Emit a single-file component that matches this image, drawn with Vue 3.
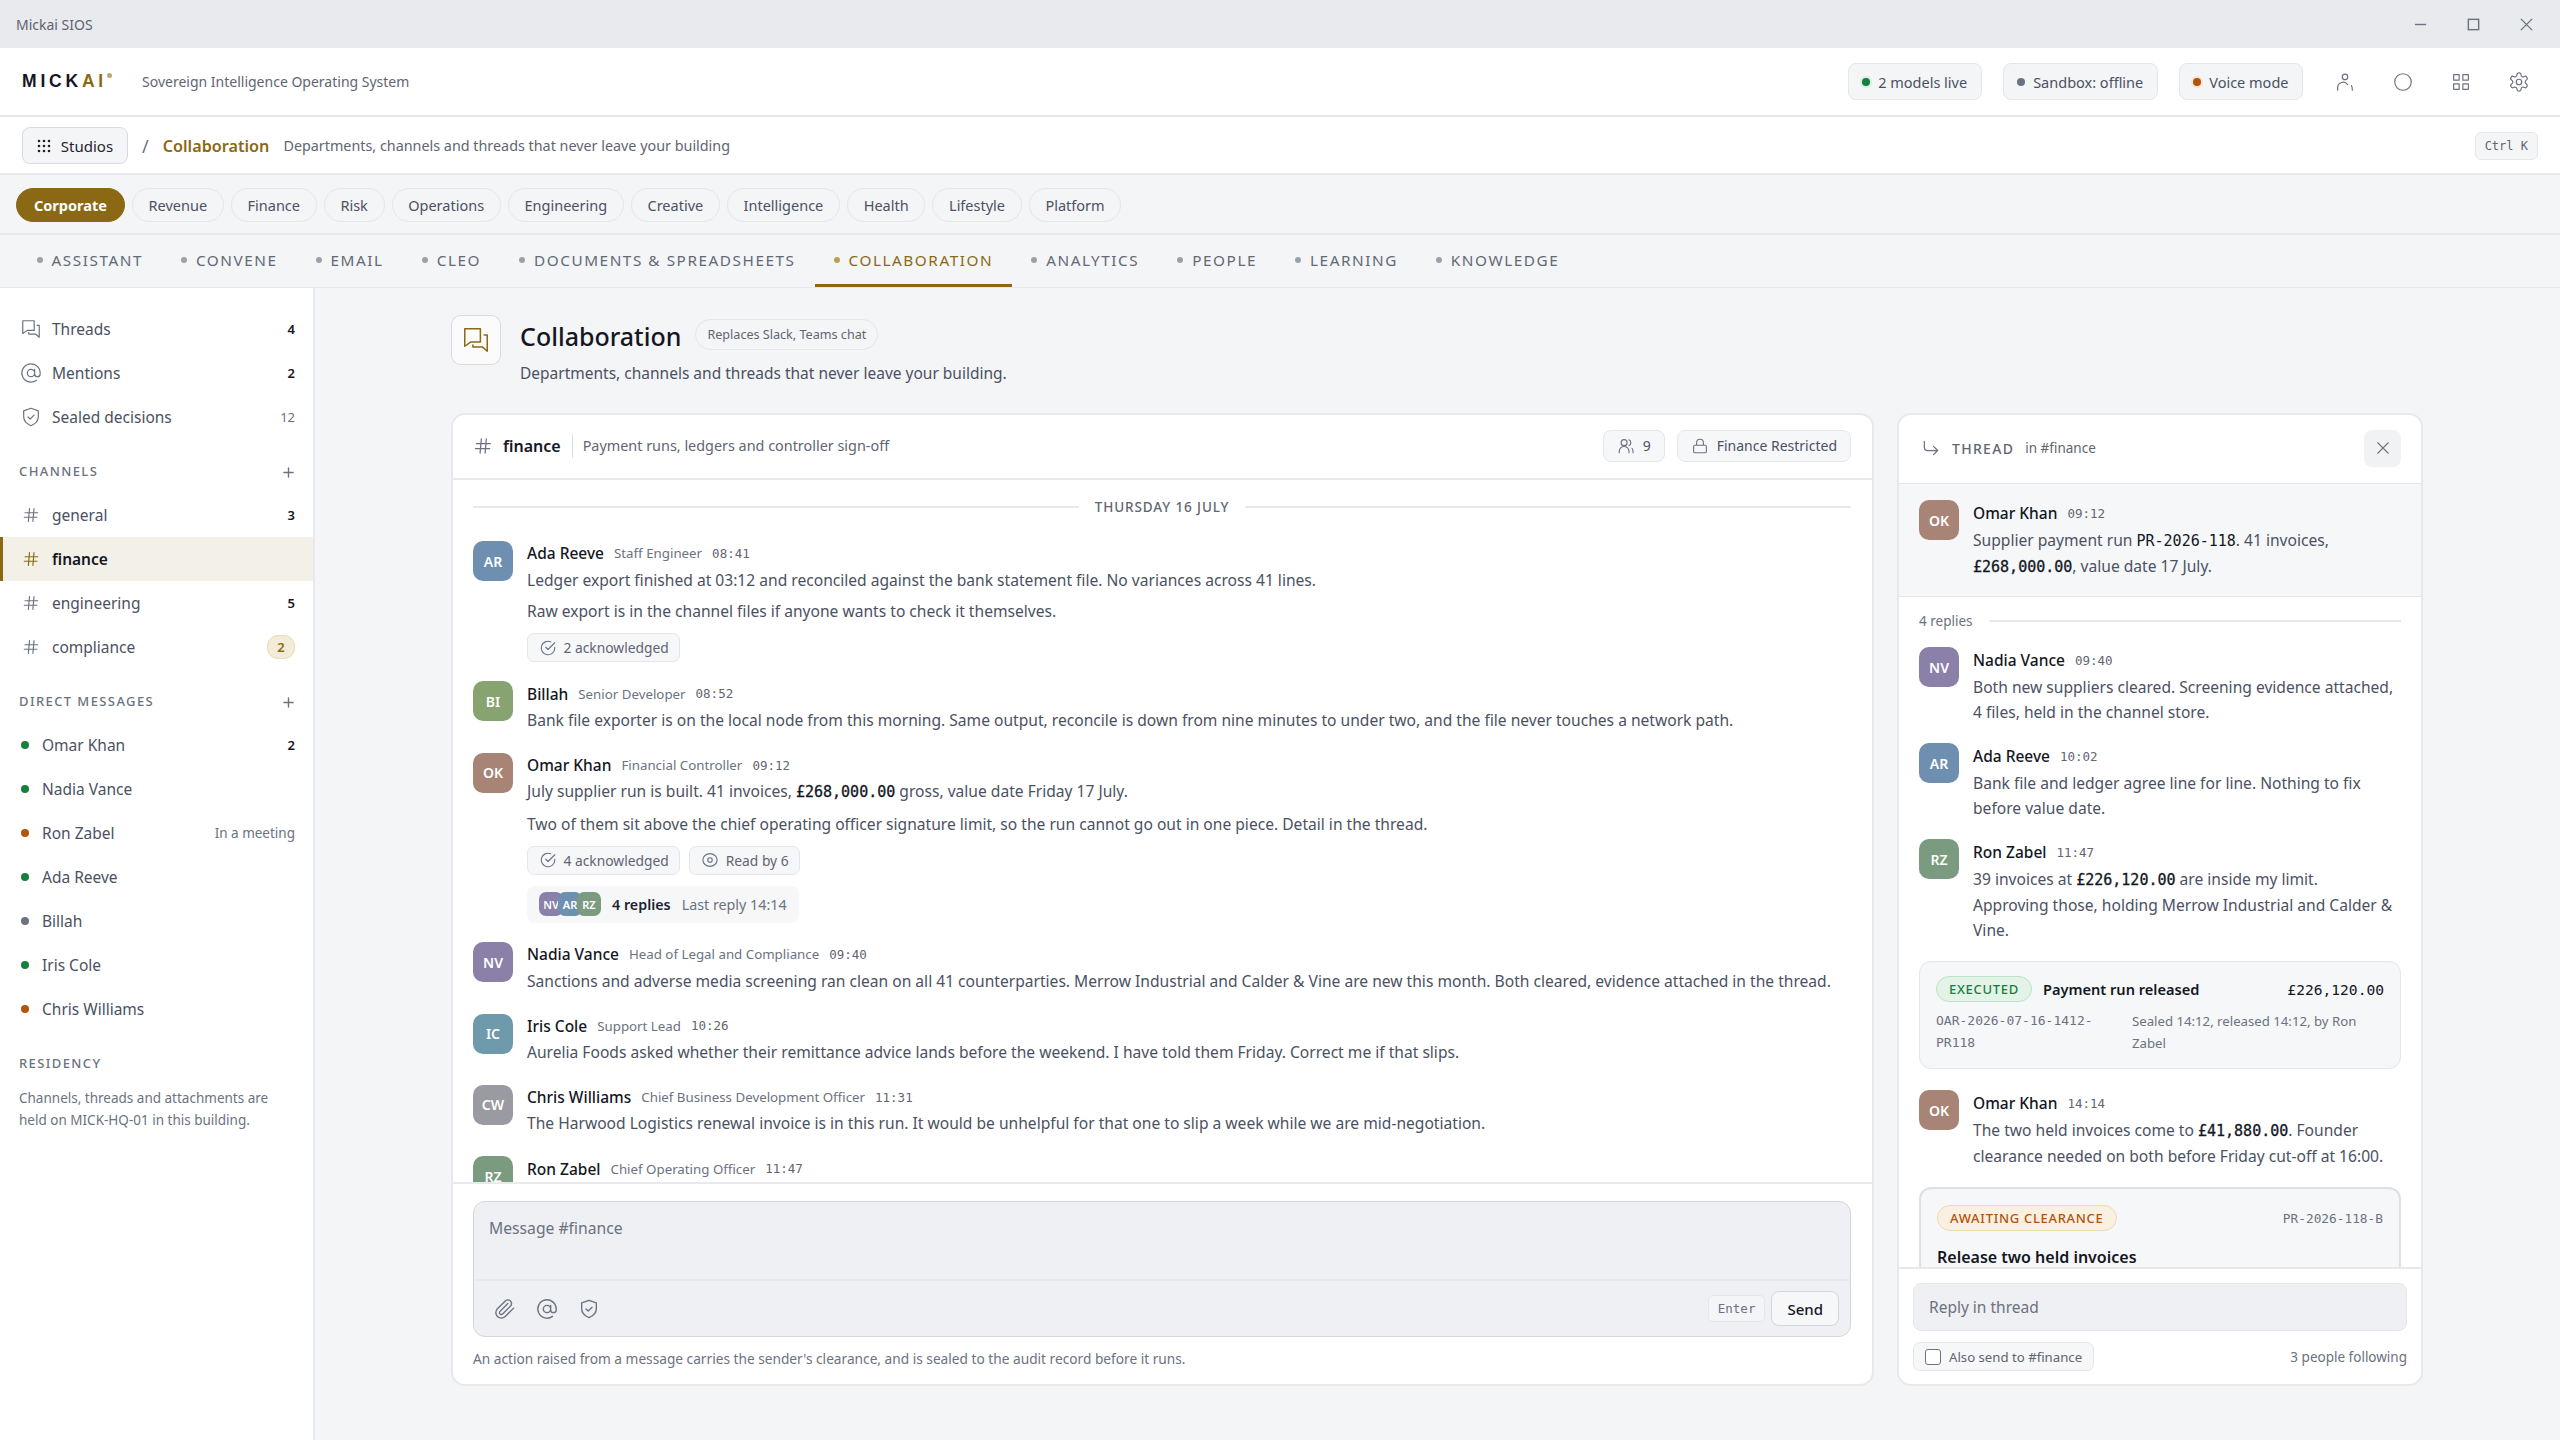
<template>
  <div class="app">
    <div class="titlebar">
      <span class="win-title">Mickai SIOS</span>
      <div class="win-ctrls">
        <svg class="win-ic" viewBox="0 0 16 16"><path d="M2 8h12" /></svg>
        <svg class="win-ic" viewBox="0 0 16 16"><rect x="2.5" y="2.5" width="11" height="11" /></svg>
        <svg class="win-ic" viewBox="0 0 16 16"><path d="M2 2l12 12M14 2L2 14" /></svg>
      </div>
    </div>

    <header class="topbar">
      <div class="logo"><span>MICK</span><span class="gold">AI</span><i class="reg"></i></div>
      <span class="tagline">Sovereign Intelligence Operating System</span>
      <div class="top-right">
        <div v-for="s in statuses" :key="s.label" class="status">
          <i class="dot" :class="s.tone"></i>{{ s.label }}
        </div>
        <div class="top-icons">
          <svg v-for="n in ['user', 'ring', 'grid', 'gear']" :key="n" class="ic top-ic" viewBox="0 0 24 24"><path :d="icons[n]" /></svg>
        </div>
      </div>
    </header>

    <div class="crumbs">
      <button class="studios">
        <svg class="dots-ic" viewBox="0 0 14 14"><circle v-for="p in gridDots" :key="p[0] + '-' + p[1]" :cx="p[0]" :cy="p[1]" r="1.3" /></svg>
        Studios
      </button>
      <span class="slash">/</span>
      <span class="crumb-now">Collaboration</span>
      <span class="crumb-sub">Departments, channels and threads that never leave your building</span>
      <kbd class="kbd">Ctrl K</kbd>
    </div>

    <div class="depts">
      <span v-for="(d, i) in departments" :key="d" class="dept" :class="{ on: i === 0 }">{{ d }}</span>
    </div>

    <nav class="tabs">
      <span v-for="t in tabs" :key="t" class="tab" :class="{ on: t === 'Collaboration' }"><i></i>{{ t }}</span>
    </nav>

    <div class="body">
      <aside class="side">
        <div v-for="r in sideTop" :key="r.label" class="side-row">
          <svg class="ic side-ic" viewBox="0 0 24 24"><path :d="icons[r.icon]" /></svg>
          <span class="side-name">{{ r.label }}</span>
          <span class="count" :class="{ muted: r.muted }">{{ r.n }}</span>
        </div>

        <div class="side-head first"><span>CHANNELS</span><svg class="ic plus" viewBox="0 0 24 24"><path :d="icons.plus" /></svg></div>
        <div v-for="c in channels" :key="c.name" class="side-row" :class="{ active: c.active }">
          <svg class="ic side-ic hash" viewBox="0 0 24 24"><path :d="icons.hash" /></svg>
          <span class="side-name">{{ c.name }}</span>
          <span v-if="c.badge" class="badge">{{ c.badge }}</span>
          <span v-else-if="c.n" class="count">{{ c.n }}</span>
        </div>

        <div class="side-head"><span>DIRECT MESSAGES</span><svg class="ic plus" viewBox="0 0 24 24"><path :d="icons.plus" /></svg></div>
        <div v-for="d in dms" :key="d.name" class="side-row dm">
          <i class="dot" :class="d.tone"></i>
          <span class="side-name">{{ d.name }}</span>
          <span v-if="d.n" class="count">{{ d.n }}</span>
          <span v-if="d.note" class="dm-note">{{ d.note }}</span>
        </div>

        <div class="side-head residency"><span>RESIDENCY</span></div>
        <p class="res-text">Channels, threads and attachments are held on MICK-HQ-01 in this building.</p>
      </aside>

      <main class="main">
        <div class="page-head">
          <div class="page-icon">
            <svg class="ic" viewBox="0 0 24 24"><path :d="icons.chat" /></svg>
          </div>
          <div>
            <div class="page-title"><h1>Collaboration</h1><span class="replaces">Replaces Slack, Teams chat</span></div>
            <p class="page-sub">Departments, channels and threads that never leave your building.</p>
          </div>
        </div>

        <div class="panels">
          <section class="card channel">
            <div class="chan-head">
              <svg class="ic chan-hash" viewBox="0 0 24 24"><path :d="icons.hash" /></svg>
              <strong class="chan-name">finance</strong>
              <span class="chan-desc">Payment runs, ledgers and controller sign-off</span>
              <span class="chip members"><svg class="ic" viewBox="0 0 24 24"><path :d="icons.users" /></svg>9</span>
              <span class="chip"><svg class="ic" viewBox="0 0 24 24"><path :d="icons.lock" /></svg>Finance Restricted</span>
            </div>

            <div class="messages">
              <div class="date-line"><span>THURSDAY 16 JULY</span></div>
              <article v-for="m in messages" :key="m.time" class="msg">
                <div class="avatar" :style="{ background: people[m.who].color }">{{ m.who }}</div>
                <div class="msg-main">
                  <div class="msg-top">
                    <span class="who">{{ people[m.who].name }}</span>
                    <span class="role">{{ people[m.who].role }}</span>
                    <span class="time">{{ m.time }}</span>
                  </div>
                  <p v-for="(line, i) in m.lines" :key="i" class="text">
                    <template v-for="(seg, j) in segments(line)" :key="j"><code v-if="j % 2">{{ seg }}</code><template v-else>{{ seg }}</template></template>
                  </p>
                  <div v-if="m.acks" class="acks">
                    <span class="ack"><svg class="ic" viewBox="0 0 24 24"><path :d="icons.check" /></svg>{{ m.acks }} acknowledged</span>
                    <span v-if="m.read" class="ack"><svg class="ic" viewBox="0 0 24 24"><path :d="icons.eye" /></svg>Read by {{ m.read }}</span>
                  </div>
                  <div v-if="m.replies" class="reply-bar">
                    <div class="stack">
                      <span v-for="w in m.replyBy" :key="w" :style="{ background: people[w].color }">{{ w }}</span>
                    </div>
                    <strong>{{ m.replies }} replies</strong>
                    <span class="last">Last reply 14:14</span>
                  </div>
                </div>
              </article>
            </div>

            <div class="composer-wrap">
              <div class="composer">
                <div class="composer-input">Message #finance</div>
                <div class="composer-tools">
                  <svg v-for="n in ['clip', 'at', 'shield']" :key="n" class="ic" viewBox="0 0 24 24"><path :d="icons[n]" /></svg>
                  <kbd class="kbd enter">Enter</kbd>
                  <button class="send">Send</button>
                </div>
              </div>
              <p class="fine">An action raised from a message carries the sender's clearance, and is sealed to the audit record before it runs.</p>
            </div>
          </section>

          <section class="card thread">
            <div class="thread-head">
              <svg class="ic" viewBox="0 0 24 24"><path :d="icons.reply" /></svg>
              <span class="thread-label">THREAD</span>
              <span class="thread-in">in #finance</span>
              <button class="close"><svg class="ic" viewBox="0 0 24 24"><path :d="icons.x" /></svg></button>
            </div>

            <div class="thread-root">
              <div class="avatar" :style="{ background: people.OK.color }">OK</div>
              <div class="msg-main">
                <div class="msg-top"><span class="who">Omar Khan</span><span class="time">09:12</span></div>
                <p class="text">Supplier payment run <code class="plain">PR-2026-118</code>. 41 invoices, <code>£268,000.00</code>, value date 17 July.</p>
              </div>
            </div>

            <div class="thread-scroll">
              <div class="replies-line"><span>4 replies</span></div>
              <template v-for="r in threadItems" :key="r.key">
                <article v-if="r.who" class="msg">
                  <div class="avatar" :style="{ background: people[r.who].color }">{{ r.who }}</div>
                  <div class="msg-main">
                    <div class="msg-top"><span class="who">{{ people[r.who].name }}</span><span class="time">{{ r.time }}</span></div>
                    <p class="text">
                      <template v-for="(seg, j) in segments(r.text)" :key="j"><code v-if="j % 2">{{ seg }}</code><template v-else>{{ seg }}</template></template>
                    </p>
                  </div>
                </article>

                <div v-else-if="r.key === 'executed'" class="action">
                  <div class="action-top">
                    <span class="pill ok">EXECUTED</span>
                    <strong>Payment run released</strong>
                    <code class="amount">£226,120.00</code>
                  </div>
                  <div class="action-meta">
                    <code>OAR-2026-07-16-1412-PR118</code>
                    <span>Sealed 14:12, released 14:12, by Ron Zabel</span>
                  </div>
                </div>

                <div v-else class="action pending">
                  <div class="action-top between">
                    <span class="pill warn">AWAITING CLEARANCE</span>
                    <code class="ref">PR-2026-118-B</code>
                  </div>
                  <strong class="pending-title">Release two held invoices</strong>
                </div>
              </template>
            </div>

            <div class="thread-foot">
              <div class="reply-input">Reply in thread</div>
              <div class="foot-row">
                <label class="also"><i class="box"></i>Also send to #finance</label>
                <span class="following">3 people following</span>
              </div>
            </div>
          </section>
        </div>
      </main>
    </div>
  </div>
</template>

<script setup>
const statuses = [
  { label: '2 models live', tone: 'green' },
  { label: 'Sandbox: offline', tone: 'grey' },
  { label: 'Voice mode', tone: 'orange' }
]

const gridDots = [2, 7, 12].flatMap(x => [2, 7, 12].map(y => [x, y]))

const departments = ['Corporate', 'Revenue', 'Finance', 'Risk', 'Operations', 'Engineering', 'Creative', 'Intelligence', 'Health', 'Lifestyle', 'Platform']
const tabs = ['Assistant', 'Convene', 'Email', 'Cleo', 'Documents & Spreadsheets', 'Collaboration', 'Analytics', 'People', 'Learning', 'Knowledge']

const sideTop = [
  { label: 'Threads', icon: 'chat', n: 4 },
  { label: 'Mentions', icon: 'at', n: 2 },
  { label: 'Sealed decisions', icon: 'shield', n: 12, muted: true }
]

const channels = [
  { name: 'general', n: 3 },
  { name: 'finance', active: true },
  { name: 'engineering', n: 5 },
  { name: 'compliance', badge: 2 }
]

const dms = [
  { name: 'Omar Khan', tone: 'green', n: 2 },
  { name: 'Nadia Vance', tone: 'green' },
  { name: 'Ron Zabel', tone: 'orange', note: 'In a meeting' },
  { name: 'Ada Reeve', tone: 'green' },
  { name: 'Billah', tone: 'grey' },
  { name: 'Iris Cole', tone: 'green' },
  { name: 'Chris Williams', tone: 'orange' }
]

const people = {
  AR: { name: 'Ada Reeve', role: 'Staff Engineer', color: '#6f8fb0' },
  BI: { name: 'Billah', role: 'Senior Developer', color: '#87a36f' },
  OK: { name: 'Omar Khan', role: 'Financial Controller', color: '#a88476' },
  NV: { name: 'Nadia Vance', role: 'Head of Legal and Compliance', color: '#8a80a8' },
  IC: { name: 'Iris Cole', role: 'Support Lead', color: '#6e9aab' },
  CW: { name: 'Chris Williams', role: 'Chief Business Development Officer', color: '#9a9aa3' },
  RZ: { name: 'Ron Zabel', role: 'Chief Operating Officer', color: '#7b9b80' }
}

const messages = [
  { who: 'AR', time: '08:41', acks: 2, lines: ['Ledger export finished at 03:12 and reconciled against the bank statement file. No variances across 41 lines.', 'Raw export is in the channel files if anyone wants to check it themselves.'] },
  { who: 'BI', time: '08:52', lines: ['Bank file exporter is on the local node from this morning. Same output, reconcile is down from nine minutes to under two, and the file never touches a network path.'] },
  { who: 'OK', time: '09:12', acks: 4, read: 6, replies: 4, replyBy: ['NV', 'AR', 'RZ'], lines: ['July supplier run is built. 41 invoices, `£268,000.00` gross, value date Friday 17 July.', 'Two of them sit above the chief operating officer signature limit, so the run cannot go out in one piece. Detail in the thread.'] },
  { who: 'NV', time: '09:40', lines: ['Sanctions and adverse media screening ran clean on all 41 counterparties. Merrow Industrial and Calder & Vine are new this month. Both cleared, evidence attached in the thread.'] },
  { who: 'IC', time: '10:26', lines: ['Aurelia Foods asked whether their remittance advice lands before the weekend. I have told them Friday. Correct me if that slips.'] },
  { who: 'CW', time: '11:31', lines: ['The Harwood Logistics renewal invoice is in this run. It would be unhelpful for that one to slip a week while we are mid-negotiation.'] },
  { who: 'RZ', time: '11:47', lines: [] }
]

const threadItems = [
  { key: 'nv', who: 'NV', time: '09:40', text: 'Both new suppliers cleared. Screening evidence attached, 4 files, held in the channel store.' },
  { key: 'ar', who: 'AR', time: '10:02', text: 'Bank file and ledger agree line for line. Nothing to fix before value date.' },
  { key: 'rz', who: 'RZ', time: '11:47', text: '39 invoices at `£226,120.00` are inside my limit. Approving those, holding Merrow Industrial and Calder & Vine.' },
  { key: 'executed' },
  { key: 'ok', who: 'OK', time: '14:14', text: 'The two held invoices come to `£41,880.00`. Founder clearance needed on both before Friday cut-off at 16:00.' },
  { key: 'pending' }
]

// backticks mark the money values, which are set in mono
const segments = s => s.split('`')

const icons = {
  user: 'M12 3.5a3 3 0 1 1 0 6 3 3 0 0 1 0-6zM4 21v-3a6 6 0 0 1 11-3M19 16c.8 1 1 2 1 5',
  ring: 'M12 3a9 9 0 1 1 0 18 9 9 0 0 1 0-18z',
  grid: 'M4 4h6v6H4zM14 4h6v6h-6zM4 14h6v6H4zM14 14h6v6h-6z',
  gear: 'M12.22 2h-.44a2 2 0 0 0-2 2v.18a2 2 0 0 1-1 1.73l-.43.25a2 2 0 0 1-2 0l-.15-.08a2 2 0 0 0-2.73.73l-.22.38a2 2 0 0 0 .73 2.73l.15.1a2 2 0 0 1 1 1.72v.51a2 2 0 0 1-1 1.74l-.15.09a2 2 0 0 0-.73 2.73l.22.38a2 2 0 0 0 2.73.73l.15-.08a2 2 0 0 1 2 0l.43.25a2 2 0 0 1 1 1.73V20a2 2 0 0 0 2 2h.44a2 2 0 0 0 2-2v-.18a2 2 0 0 1 1-1.73l.43-.25a2 2 0 0 1 2 0l.15.08a2 2 0 0 0 2.73-.73l.22-.39a2 2 0 0 0-.73-2.73l-.15-.08a2 2 0 0 1-1-1.74v-.5a2 2 0 0 1 1-1.74l.15-.09a2 2 0 0 0 .73-2.73l-.22-.38a2 2 0 0 0-2.73-.73l-.15.08a2 2 0 0 1-2 0l-.43-.25a2 2 0 0 1-1-1.73V4a2 2 0 0 0-2-2zM15 12a3 3 0 1 1-6 0 3 3 0 0 1 6 0z',
  chat: 'M3 3h12.500v10.500H8L3 17zM18.500 8H21v13l-4-3.500H9.500V16',
  at: 'M16 12a4 4 0 1 1-8 0 4 4 0 0 1 8 0zM16 8v5a3 3 0 0 0 6 0v-1a10 10 0 1 0-4 8',
  shield: 'M12 2.500l8 2.800v6.200c0 4.800-3.200 8-8 10-4.800-2-8-5.200-8-10V5.300zM8.800 12l2.300 2.300 4.200-4.300',
  hash: 'M4 9h17M3 15h17M10 3.500 8.500 20.500M16 3.500l-1.500 17',
  plus: 'M12 5.500v13M5.500 12h13',
  check: 'M21 11v1a9 9 0 1 1-5.300-8.200M21 5l-9 9-3-3',
  eye: 'M2.500 12a9.500 8.500 0 1 1 19 0 9.500 8.500 0 0 1-19 0zM15 12a3 3 0 1 1-6 0 3 3 0 0 1 6 0z',
  users: 'M9.500 3.500a4 4 0 1 1 0 8 4 4 0 0 1 0-8zM3 21v-2a6.500 6.500 0 0 1 13 0v2M16 3.800a4 4 0 0 1 0 7.400M20 15c1 1.200 1.500 3 1.500 6',
  lock: 'M5 11h14a1.500 1.500 0 0 1 1.500 1.500v7A1.500 1.500 0 0 1 19 21H5a1.500 1.500 0 0 1-1.500-1.500v-7A1.500 1.500 0 0 1 5 11zM7.500 11V7.500a4.500 4.500 0 0 1 9 0V11',
  clip: 'M21.440 11.050l-9.190 9.190a6 6 0 0 1-8.490-8.490l8.570-8.570A4 4 0 1 1 18 8.840l-8.590 8.570a2 2 0 0 1-2.830-2.830l8.490-8.480',
  reply: 'M4 4v7a4 4 0 0 0 4 4h12M15 10l5 5-5 5',
  x: 'M5 5l14 14M19 5L5 19'
}
</script>

<style>
html, body { margin: 0; background: #f4f5f7; }
</style>

<style scoped>
.app {
  width: 2560px;
  height: 1440px;
  overflow: hidden;
  display: flex;
  flex-direction: column;
  background: #f4f5f7;
  color: #4b5162;
  font-family: "Noto Sans", "Liberation Sans", sans-serif;
  font-size: 15px;
}
p, h1 { margin: 0; }
code, kbd { font-family: "DejaVu Sans Mono", "Liberation Mono", monospace; }
button { font-family: inherit; }
i { font-style: normal; display: block; flex: none; }

.ic {
  width: 18px;
  height: 18px;
  flex: none;
  fill: none;
  stroke: #6b7280;
  stroke-width: 1.5;
  stroke-linecap: round;
  stroke-linejoin: round;
}

.titlebar {
  height: 48px;
  flex: none;
  display: flex;
  align-items: center;
  justify-content: space-between;
  padding: 0 26px 0 16px;
  background: #e8eaee;
  font-size: 14px;
  color: #5d6370;
}
.win-ctrls { display: flex; gap: 38px; }
.win-ic { width: 15px; height: 15px; fill: none; stroke: #6b7280; stroke-width: 1.5; }

.topbar {
  height: 69px;
  flex: none;
  display: flex;
  align-items: center;
  padding: 0 30px 0 22px;
  background: #fff;
  border-bottom: 2px solid #e8e9ed;
  box-sizing: border-box;
}
.logo {
  display: flex;
  align-items: flex-start;
  font-family: "Liberation Sans", sans-serif;
  font-weight: 700;
  font-size: 17.5px;
  letter-spacing: 3.8px;
  color: #14171f;
}
.gold { color: #8b6914; }
.reg { width: 5px; height: 5px; margin: 2px 0 0 0; border-radius: 50%; background: #b9a878; }
.tagline { margin-left: 30px; font-size: 14px; color: #5f6572; }
.top-right { margin-left: auto; display: flex; align-items: center; gap: 21px; }
.status {
  height: 37px;
  box-sizing: border-box;
  display: flex;
  align-items: center;
  gap: 8px;
  padding: 0 13.5px;
  background: #f4f5f7;
  border: 1px solid #e4e6ea;
  border-radius: 8px;
  font-size: 14.5px;
  color: #4b5162;
}
.dot { width: 8px; height: 8px; border-radius: 50%; }
.dot.green { background: #15803d; }
.dot.grey { background: #6b7280; }
.dot.orange { background: #b45309; }
.status .dot.green { box-shadow: 0 0 0 2px #d8efe0; }
.status .dot.orange { box-shadow: 0 0 0 2px #f6e5cf; }
.top-icons { display: flex; gap: 36px; margin-left: 10px; }
.top-ic { width: 22px; height: 22px; stroke-width: 1.3; }

.crumbs {
  height: 58px;
  flex: none;
  box-sizing: border-box;
  display: flex;
  align-items: center;
  padding: 1px 22px 0;
  background: #fff;
  border-bottom: 2px solid #e8e9ed;
}
.studios {
  width: 106px;
  height: 37px;
  display: flex;
  align-items: center;
  justify-content: center;
  gap: 10px;
  padding: 0;
  background: #f4f5f7;
  border: 1px solid #d7dae0;
  border-radius: 8px;
  font-size: 15px;
  color: #1f2430;
}
.dots-ic { width: 14px; height: 14px; fill: #1f2430; }
.slash { margin: 0 14px; font-size: 18px; color: #6b7280; }
.crumb-now { font-size: 16.2px; font-weight: 600; color: #8b6914; padding-top: 1px; }
.crumb-sub { margin-left: 14px; font-size: 14.35px; color: #5f6572; }
.kbd {
  height: 28px;
  box-sizing: border-box;
  display: flex;
  align-items: center;
  padding: 0 9px;
  margin-left: auto;
  background: #f4f5f7;
  border: 1px solid #e4e6ea;
  border-radius: 6px;
  font-size: 12px;
  color: #5f6572;
}

.depts {
  height: 60px;
  flex: none;
  box-sizing: border-box;
  display: flex;
  align-items: center;
  gap: 7px;
  padding: 2px 16px 0;
  border-bottom: 2px solid #e8e9ed;
}
.dept {
  height: 34px;
  box-sizing: border-box;
  display: flex;
  align-items: center;
  padding: 0 15.7px;
  border: 1px solid #e4e6ea;
  border-radius: 17px;
  font-size: 14.5px;
  color: #4b5162;
}
.dept.on { padding: 0 17px; background: #8b6914; border-color: #8b6914; color: #fff; font-weight: 700; }

.tabs {
  height: 53px;
  flex: none;
  box-sizing: border-box;
  display: flex;
  padding-left: 17.5px;
  border-bottom: 1px solid #e8e9ed;
}
.tab {
  display: flex;
  align-items: center;
  gap: 9px;
  padding: 0 19px;
  border-bottom: 3px solid transparent;
  font-size: 15.3px;
  letter-spacing: 1.55px;
  text-transform: uppercase;
  color: #636975;
}
.tab i { width: 6px; height: 6px; border-radius: 50%; background: #9ca0aa; }
.tab.on { color: #8b6914; border-bottom-color: #8b6914; }
.tab.on i { background: #b9a050; }

.body { flex: 1; min-height: 0; display: flex; }

.side {
  width: 315px;
  flex: none;
  box-sizing: border-box;
  padding-top: 19px;
  background: #fff;
  border-right: 2px solid #e8e9ed;
}
.side-row {
  height: 44px;
  box-sizing: border-box;
  display: flex;
  align-items: center;
  padding: 0 18px 0 22px;
  font-size: 15.5px;
  color: #4b5162;
}
.side-row.active { background: #f3f0e7; border-left: 3px solid #8b6914; padding-left: 19px; color: #14171f; font-weight: 600; }
.side-row.active .ic { stroke: #8b6914; }
.side-ic { margin-right: 12px; }
.side-ic:not(.hash) { width: 22px; height: 22px; margin: 0 10px 0 -2px; stroke-width: 1.3; }
.side-name { flex: 1; }
.count { font-size: 13px; font-weight: 600; color: #14171f; }
.count.muted { color: #6b7280; font-weight: 400; }
.badge {
  width: 26px;
  height: 22px;
  display: flex;
  align-items: center;
  justify-content: center;
  background: #f3ecd9;
  border: 1px solid #e6dab8;
  border-radius: 11px;
  font-size: 13px;
  font-weight: 600;
  color: #8b6914;
}
.side-head {
  height: 44px;
  margin-top: 10px;
  display: flex;
  align-items: center;
  justify-content: space-between;
  padding: 0 16.5px 0 19px;
  font-size: 13px;
  font-weight: 500;
  letter-spacing: 1.4px;
  color: #6b7280;
}
.side-head.first { margin-top: 9.5px; }
.plus { width: 17px; height: 17px; margin-top: 4px; stroke-width: 2; }
.dm { padding-left: 21px; }
.dm .dot { margin-right: 13px; }
.dm-note { font-size: 13.5px; color: #6b7280; }
.residency { margin-top: 12px; height: 40px; }
.res-text { padding: 4px 19px 0; font-size: 13.5px; line-height: 22px; color: #6b7280; }

.main {
  flex: 1;
  min-width: 0;
  box-sizing: border-box;
  display: flex;
  flex-direction: column;
  padding: 27px 135px 54px 136px;
}
.page-head { display: flex; gap: 19px; margin-bottom: 28px; }
.page-icon {
  width: 50px;
  height: 50px;
  box-sizing: border-box;
  display: flex;
  align-items: center;
  justify-content: center;
  background: #fbfbfc;
  border: 1.5px solid #d7dae0;
  border-radius: 10px;
}
.page-icon .ic { width: 30px; height: 30px; stroke: #8b6914; stroke-width: 1.2; }
.page-title { display: flex; align-items: center; gap: 14px; height: 42px; }
h1 { font-size: 25px; font-weight: 500; color: #14171f; }
.replaces {
  height: 31px;
  box-sizing: border-box;
  display: flex;
  align-items: center;
  padding: 0 11px;
  margin-top: -4px;
  border: 1px solid #e4e6ea;
  border-radius: 16px;
  font-size: 12.6px;
  color: #5f6572;
}
.page-sub { margin-top: 4px; font-size: 15.5px; line-height: 24px; color: #4b5162; }

.panels { flex: 1; min-height: 0; display: flex; gap: 23px; }
.card {
  display: flex;
  flex-direction: column;
  overflow: hidden;
  background: #fff;
  border: 2px solid #e8e9ed;
  border-radius: 14px;
  box-sizing: border-box;
}
.channel { width: 1423px; flex: none; }
.thread { width: 526px; flex: none; }

.chan-head {
  height: 65px;
  flex: none;
  box-sizing: border-box;
  display: flex;
  align-items: center;
  padding: 0 21px 2px 20px;
  border-bottom: 2px solid #e8e9ed;
}
.chan-hash { width: 20px; height: 20px; margin-right: 10px; }
.chan-name { font-size: 16px; font-weight: 600; color: #14171f; }
.chan-desc { flex: 1; margin-left: 11px; padding-left: 11px; font-size: 14.4px; color: #5f6572; line-height: 24px; position: relative; }
.chan-desc::before { content: ""; position: absolute; left: 0; top: 0; height: 24px; border-left: 1px solid #dcdfe4; }
.chip {
  height: 32px;
  box-sizing: border-box;
  display: flex;
  align-items: center;
  gap: 8px;
  padding: 0 13px;
  margin-left: 12px;
  background: #f6f7f9;
  border: 1px solid #e4e6ea;
  border-radius: 8px;
  font-size: 14px;
  color: #4b5162;
}

.messages { flex: 1; min-height: 0; overflow: hidden; padding: 15px 21px 0 20px; border-bottom: 2px solid #e8e9ed; }
.date-line {
  height: 24px;
  margin-bottom: 22px;
  display: flex;
  align-items: center;
  gap: 16px;
  font-size: 13.5px;
  letter-spacing: .9px;
  font-weight: 500;
  color: #5f6572;
}
.date-line::before, .date-line::after { content: ""; flex: 1; height: 2px; background: #e8e9ed; }

.msg { display: flex; gap: 14px; margin-bottom: 19.4px; }
.avatar {
  width: 40px;
  height: 40px;
  flex: none;
  display: flex;
  align-items: center;
  justify-content: center;
  border-radius: 10px;
  font-size: 14px;
  font-weight: 600;
  color: #fff;
}
.msg-main { flex: 1; min-width: 0; }
.msg-top { height: 26.5px; box-sizing: border-box; padding-bottom: 2px; display: flex; align-items: center; gap: 10px; }
.who { font-size: 15.5px; font-weight: 500; color: #14171f; }
.role { font-size: 13.3px; color: #6b7280; }
.time { font-family: "DejaVu Sans Mono", monospace; font-size: 12.5px; color: #5f6572; }
.text { font-size: 15.6px; line-height: 25.5px; color: #4b5162; }
.text + .text { margin-top: 6px; }
.text code { font-size: 15px; font-weight: 500; color: #14171f; -webkit-text-stroke: .3px #14171f; }
.text code.plain { -webkit-text-stroke: 0; }

.acks { display: flex; gap: 9px; margin-top: 8.5px; }
.ack {
  height: 29px;
  box-sizing: border-box;
  display: flex;
  align-items: center;
  gap: 7px;
  padding: 0 10.5px;
  background: #f6f7f9;
  border: 1px solid #e4e6ea;
  border-radius: 7px;
  font-size: 13.8px;
  color: #5f6572;
}
.reply-bar {
  width: fit-content;
  height: 37px;
  margin-top: 11px;
  display: flex;
  align-items: center;
  padding: 0 12px;
  background: #f6f7f9;
  border-radius: 8px;
  font-size: 14.3px;
}
.reply-bar strong { margin-left: 11px; font-weight: 600; color: #1f2430; }
.last { margin-left: 11px; color: #6b7280; }
.stack { display: flex; }
.stack span {
  width: 24px;
  height: 24px;
  display: flex;
  align-items: center;
  justify-content: center;
  margin-right: -5px;
  border-radius: 7px;
  font-size: 11px;
  font-weight: 600;
  color: #fff;
}
.stack span:last-child { margin-right: 0; }

.composer-wrap { flex: none; padding: 17px 21px 0 20px; height: 200px; box-sizing: border-box; }
.composer {
  height: 136px;
  box-sizing: border-box;
  display: flex;
  flex-direction: column;
  background: #eef0f3;
  border: 1px solid #d3d6dc;
  border-radius: 12px;
}
.composer-input { height: 79px; box-sizing: border-box; padding: 15px 15px; font-size: 15.7px; color: #6b7280; border-bottom: 2px solid #e8e9ed; }
.composer-tools { flex: 1; display: flex; align-items: center; gap: 20px; padding: 0 11px 0 20px; }
.composer-tools .ic { width: 22px; height: 22px; }
.kbd.enter { height: 27px; margin-right: -14px; border-radius: 5px; font-size: 12.5px; color: #6b7280; }
.send {
  height: 35px;
  padding: 0 15px;
  background: #f6f7f9;
  border: 1px solid #d3d6dc;
  border-radius: 8px;
  font-size: 15px;
  font-weight: 500;
  color: #14171f;
}
.fine { margin-top: 12px; font-size: 13.7px; color: #6b7280; }

.thread-head {
  height: 69px;
  flex: none;
  box-sizing: border-box;
  display: flex;
  align-items: center;
  padding: 0 20px 2px 22px;
  border-bottom: 1px solid #e4e6ea;
}
.thread-head > .ic { width: 20px; height: 20px; }
.thread-label { margin-left: 11px; font-size: 14px; font-weight: 500; letter-spacing: 1.3px; color: #5f6572; }
.thread-in { margin-left: 11px; font-size: 13.5px; color: #5f6572; }
.close {
  width: 37px;
  height: 37px;
  margin-left: auto;
  padding: 0;
  display: flex;
  align-items: center;
  justify-content: center;
  background: #f1f2f4;
  border: 0;
  border-radius: 8px;
}
.thread-root {
  height: 113px;
  flex: none;
  box-sizing: border-box;
  display: flex;
  gap: 14px;
  padding: 16px 22px 0 20px;
  background: #f6f7f9;
  border-bottom: 1px solid #e4e6ea;
}
.thread .msg-top { height: 28px; padding-bottom: 2px; }
.thread .text { font-size: 15.6px; line-height: 25px; }
.thread-scroll { flex: 1; min-height: 0; overflow: hidden; padding: 12px 20px 0; border-bottom: 2px solid #e8e9ed; }
.replies-line { display: flex; align-items: center; gap: 16px; height: 24px; margin-bottom: 14px; font-size: 13.5px; color: #6b7280; }
.replies-line::after { content: ""; flex: 1; height: 2px; background: #e8e9ed; }
.thread .msg { margin-bottom: 18px; padding-right: 5px; }

.action {
  margin-bottom: 21px;
  padding: 14px 16px 14px;
  background: #f6f7f9;
  border: 1px solid #e4e6ea;
  border-radius: 12px;
}
.action.pending { min-height: 150px; box-sizing: border-box; border: 2px solid #dcdfe4; padding-top: 16px; }
.action-top { display: flex; align-items: center; gap: 11px; }
.action-top.between { justify-content: space-between; }
.action-top strong { font-size: 14.6px; font-weight: 600; color: #14171f; }
.amount { margin-left: auto; font-size: 14.6px; font-weight: 500; color: #14171f; }
.ref { font-size: 12.8px; color: #6b7280; }
.pill {
  height: 26px;
  box-sizing: border-box;
  display: flex;
  align-items: center;
  padding: 0 12px;
  border-radius: 13px;
  font-size: 13px;
  font-weight: 500;
  letter-spacing: .7px;
}
.pill.ok { background: #e3f3e8; border: 1px solid #bde3ca; color: #15803d; }
.pill.warn { background: #faf0e2; border: 1px solid #f1d9b0; color: #b45309; }
.action-meta { display: grid; grid-template-columns: 180px 1fr; column-gap: 16px; margin-top: 8px; font-size: 13.2px; line-height: 22px; color: #6b7280; }
.action-meta code { font-size: 13px; word-break: break-word; }
.pending-title { display: block; margin-top: 15px; font-size: 16px; font-weight: 600; color: #14171f; }

.thread-foot { flex: none; padding: 14px 14px 0; height: 115px; box-sizing: border-box; }
.reply-input {
  height: 48px;
  box-sizing: border-box;
  display: flex;
  align-items: center;
  padding: 0 15px;
  background: #eef0f3;
  border: 1px solid #e4e6ea;
  border-radius: 8px;
  font-size: 15.5px;
  color: #6b7280;
}
.foot-row { display: flex; align-items: center; justify-content: space-between; margin-top: 11px; }
.also {
  height: 29px;
  box-sizing: border-box;
  display: flex;
  align-items: center;
  gap: 8px;
  padding: 0 11px;
  background: #f6f7f9;
  border: 1px solid #e4e6ea;
  border-radius: 7px;
  font-size: 13.2px;
  color: #5f6572;
}
.box { width: 14px; height: 14px; background: #fff; border: 1.5px solid #6b7280; border-radius: 3px; }
.following { font-size: 13.5px; color: #6b7280; }
</style>
